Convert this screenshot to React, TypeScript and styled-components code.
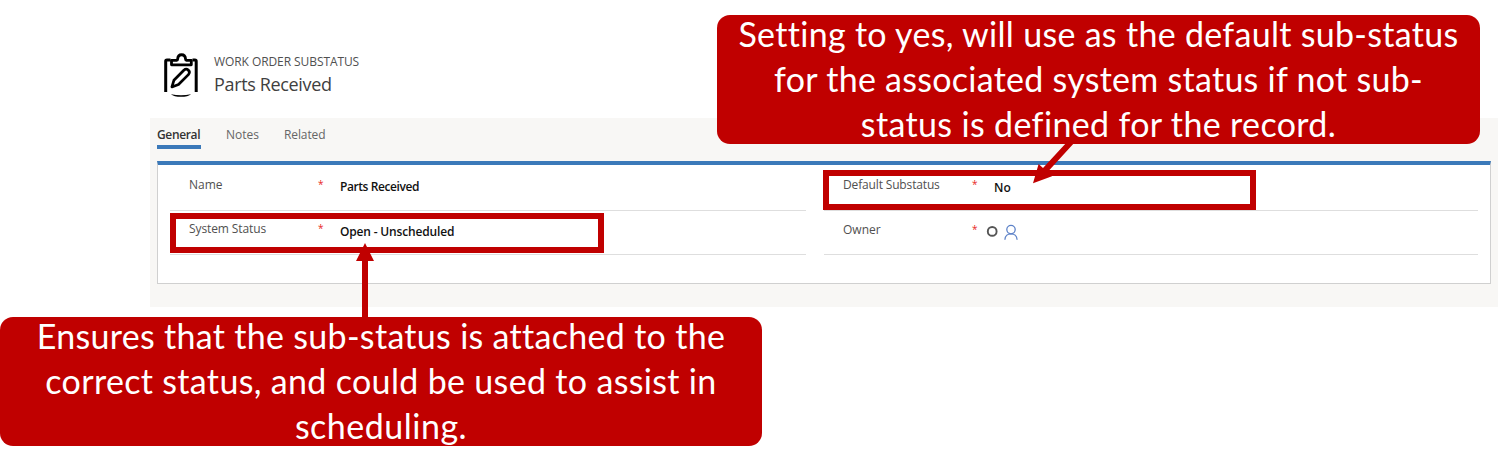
import React from "react";
import styled, { createGlobalStyle } from "styled-components";

const GlobalStyle = createGlobalStyle`
  body { margin: 0; background: #fff; }
  * { box-sizing: border-box; }
`;

const Page = styled.main`
  position: relative;
  width: 1498px;
  height: 472px;
  overflow: hidden;
  background: #fff;
  font-family: "Open Sans", "Noto Sans", sans-serif;
  color: #444;
`;

const Header = styled.header`
  display: flex;
  height: 118px;
  padding: 52px 0 0 163px;
  gap: 15px;
`;

const Titles = styled.div`
  display: flex;
  flex-direction: column;
`;

const Text = styled.span<{ $size?: number; $track?: number; $color?: string; $weight?: number }>`
  font-size: ${(p) => p.$size ?? 12}px;
  letter-spacing: ${(p) => p.$track ?? 0}px;
  color: ${(p) => p.$color ?? "#505050"};
  font-weight: ${(p) => p.$weight ?? 400};
  white-space: nowrap;
`;

const Entity = styled(Text)`
  line-height: 18px;
  margin-top: 1px;
`;

const RecordName = styled(Text)`
  line-height: 26px;
`;

const Panel = styled.section`
  height: 189px;
  margin-left: 150px;
  padding: 6px 7px 0;
  background: #f8f7f5;
`;

const Tabs = styled.nav`
  display: flex;
  gap: 25px;
  height: 37px;
`;

const Tab = styled.div<{ $active?: boolean; $width: number }>`
  width: ${(p) => p.$width}px;
  height: 25px;
  line-height: 18px;
  border-bottom: 4px solid ${(p) => (p.$active ? "#3b79b9" : "transparent")};
`;

const Card = styled.div`
  display: grid;
  grid-template-columns: 636px 654px;
  column-gap: 18px;
  height: 123px;
  padding-left: 12px;
  border: 1px solid #d0d0d0;
  border-top: 4px solid #3b79b9;
  background: #fff;
`;

const Column = styled.div`
  display: flex;
  flex-direction: column;
`;

const Field = styled.div<{ $height: number; $offset: number; $label?: number }>`
  display: grid;
  grid-template-columns: 129px ${(p) => p.$label ?? 22}px 1fr;
  align-items: start;
  height: ${(p) => p.$height}px;
  padding: ${(p) => p.$offset}px 0 0 19px;
  border-bottom: 1px solid #dedede;
  line-height: 18px;
`;

const Required = styled.span`
  color: #e8261c;
  font-size: 10px;
  line-height: 16px;
`;

const Value = styled.div<{ $drop?: number }>`
  display: flex;
  align-items: center;
  gap: 6px;
  height: 18px;
  margin-top: ${(p) => p.$drop ?? 2}px;
`;

const Highlight = styled.div<{ $x: number; $y: number; $w: number }>`
  position: absolute;
  left: ${(p) => p.$x}px;
  top: ${(p) => p.$y}px;
  width: ${(p) => p.$w}px;
  height: 40px;
  border: 6px solid #c00000;
`;

const Callout = styled.div<{ $x: number; $y: number; $w: number }>`
  position: absolute;
  left: ${(p) => p.$x}px;
  top: ${(p) => p.$y}px;
  width: ${(p) => p.$w}px;
  height: 129px;
  border-radius: 13px;
  background: #c00000;
  color: #fff;
  font-family: Lato, Carlito, sans-serif;
  font-size: 34px;
  line-height: 45px;
  text-align: center;
`;

const Lines = styled.div`
  margin-top: -4px;
  font-variant-ligatures: none;
`;

const Line = styled.div<{ $track: number }>`
  letter-spacing: ${(p) => p.$track}px;
  white-space: nowrap;
`;

const Arrows = styled.svg`
  position: absolute;
  inset: 0;
  pointer-events: none;
`;

const ClipboardIcon = () => (
  <svg width="36" height="46" viewBox="0 0 36 46" fill="none" stroke="#000">
    <path d="M2.7 40V9.2q0-1.3 1.3-1.3h3.5M29.5 7.9h2.4q1.3 0 1.3 1.3V40" strokeWidth="3" />
    <path d="M8.5 12.8V8.3h5.3c.6 0 .8-.4.8-1 .4-6.1 7.6-6.1 8 0 0 .6.2 1 .8 1h4.9v4.5z" strokeWidth="2.8" strokeLinejoin="round" />
    <path d="M8.9 34.9l2-6.6 9.9-10c3-2.7 7.5.8 4.6 4.3l-9.9 9.9z" strokeWidth="2.7" strokeLinejoin="round" />
    <path d="M8 42.2q10 2.2 20 0c-3 3.4-17 3.4-20 0z" fill="#000" stroke="none" />
  </svg>
);

const PersonIcon = () => (
  <svg width="14" height="16" viewBox="0 0 14 16" fill="none" stroke="#5d82c8" strokeWidth="1.3">
    <circle cx="7" cy="5.6" r="4.2" />
    <path d="M.9 15.8c.2-8 12-8 12.2 0" />
  </svg>
);

const RingIcon = () => (
  <svg width="12" height="12" viewBox="0 0 12 12">
    <circle cx="6.2" cy="5.4" r="4.4" fill="none" stroke="#555" strokeWidth="1.9" />
  </svg>
);

export default function App() {
  return (
    <Page>
      <GlobalStyle />
      <Header>
        <ClipboardIcon />
        <Titles>
          <Entity $size={12} $track={-0.08}>WORK ORDER SUBSTATUS</Entity>
          <RecordName $size={18} $track={-0.35} $color="#404040">Parts Received</RecordName>
        </Titles>
      </Header>
      <Panel>
        <Tabs>
          <Tab $active $width={44}><Text $weight={600} $track={-0.35} $color="#333">General</Text></Tab>
          <Tab $width={33}><Text $color="#666">Notes</Text></Tab>
          <Tab $width={42}><Text $track={-0.1} $color="#666">Related</Text></Tab>
        </Tabs>
        <Card>
          <Column>
            <Field $height={46} $offset={11}>
              <Text>Name</Text>
              <Required>*</Required>
              <Value><Text $weight={600} $track={-0.42} $color="#111">Parts Received</Text></Value>
            </Field>
            <Field $height={44} $offset={9}>
              <Text $track={-0.1}>System Status</Text>
              <Required>*</Required>
              <Value $drop={3}><Text $weight={600} $track={-0.17} $color="#111">Open - Unscheduled</Text></Value>
            </Field>
          </Column>
          <Column>
            <Field $height={46} $offset={11}>
              <Text $track={-0.15}>Default Substatus</Text>
              <Required>*</Required>
              <Value $drop={3}><Text $weight={600} $color="#111">No</Text></Value>
            </Field>
            <Field $height={44} $offset={10} $label={14}>
              <Text>Owner</Text>
              <Required>*</Required>
              <Value><RingIcon /><PersonIcon /></Value>
            </Field>
          </Column>
        </Card>
      </Panel>

      <Highlight $x={170} $y={213} $w={434} />
      <Highlight $x={823} $y={170} $w={433} />
      <Callout $x={717} $y={15} $w={763}>
        <Lines>
          <Line $track={0.3}>Setting to yes, will use as the default sub-status</Line>
          <Line $track={0.27}>for the associated system status if not sub-</Line>
          <Line $track={0.35}>status is defined for the record.</Line>
        </Lines>
      </Callout>
      <Callout $x={0} $y={317} $w={762}>
        <Lines>
          <Line $track={0.3}>Ensures that the sub-status is attached to the</Line>
          <Line $track={0.33}>correct status, and could be used to assist in</Line>
          <Line $track={0.5}>scheduling.</Line>
        </Lines>
      </Callout>
      <Arrows width="1498" height="472" viewBox="0 0 1498 472" fill="#c00000">
        <path d="M362 318V261h-6l9-18 9 18h-6v57z" />
        <path d="M1033 183.3l5.6-19.2 4.4 4L1067 142h8l-27.4 30 4.4 4.2z" />
      </Arrows>
    </Page>
  );
}
